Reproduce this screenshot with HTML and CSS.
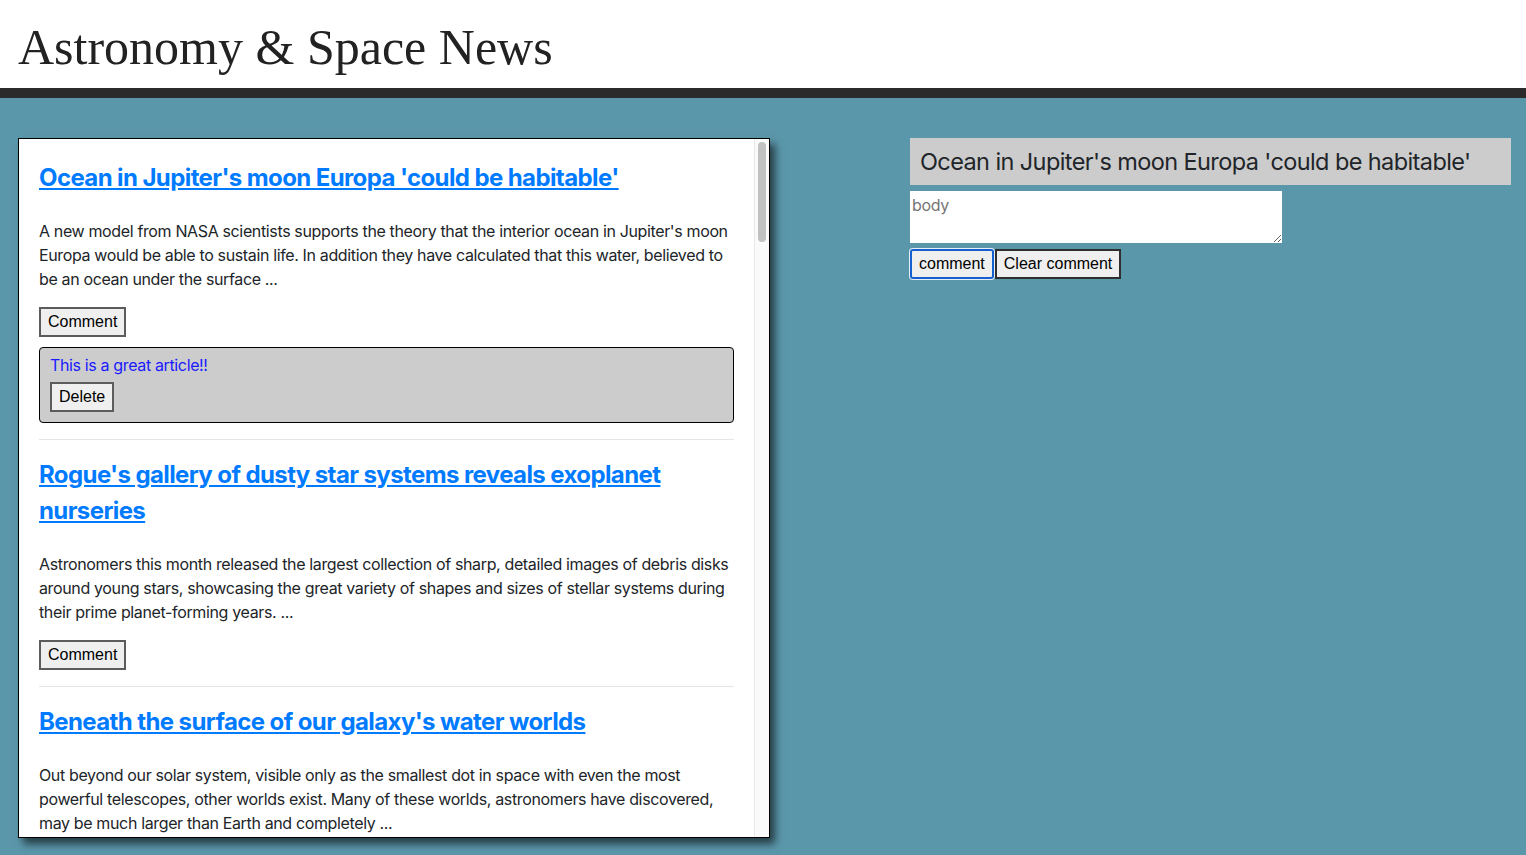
FILE: index.html
```html
<!DOCTYPE html>
<html lang="en">
<head>
<meta charset="utf-8">
<title>Astronomy &amp; Space News</title>
<link rel="stylesheet" href="styles.css">
</head>
<body>
<header class="site-header">
  <h1 class="site-title">Astronomy &amp; Space News</h1>
</header>
<main class="layout">
  <section class="feed">
    <div class="feed-scroll">
      <article class="story">
        <h2 class="story-title"><a href="#">Ocean in Jupiter's moon Europa 'could be habitable'</a></h2>
        <p class="story-summary">A new model from NASA scientists supports the theory that the interior ocean in Jupiter's moon Europa would be able to sustain life. In addition they have calculated that this water, believed to be an ocean under the surface ...</p>
        <button class="btn">Comment</button>
        <div class="comment">
          <p class="comment-text">This is a great article!!</p>
          <button class="btn">Delete</button>
        </div>
      </article>
      <hr class="divider">
      <article class="story">
        <h2 class="story-title"><a href="#">Rogue's gallery of dusty star systems reveals exoplanet nurseries</a></h2>
        <p class="story-summary">Astronomers this month released the largest collection of sharp, detailed images of debris disks around young stars, showcasing the great variety of shapes and sizes of stellar systems during their prime planet-forming years. ...</p>
        <button class="btn">Comment</button>
      </article>
      <hr class="divider">
      <article class="story">
        <h2 class="story-title"><a href="#">Beneath the surface of our galaxy's water worlds</a></h2>
        <p class="story-summary">Out beyond our solar system, visible only as the smallest dot in space with even the most powerful telescopes, other worlds exist. Many of these worlds, astronomers have discovered, may be much larger than Earth and completely ...</p>
      </article>
    </div>
    <div class="scrollbar">
      <div class="scrollbar-thumb"></div>
    </div>
  </section>
  <aside class="composer">
    <h2 class="composer-title">Ocean in Jupiter's moon Europa 'could be habitable'</h2>
    <textarea class="composer-body" placeholder="body"></textarea>
    <div class="composer-actions">
      <button class="btn btn-focus">comment</button>
      <button class="btn btn-dark">Clear comment</button>
    </div>
  </aside>
</main>
</body>
</html>
```

FILE: styles.css
```css
html, body {
  margin: 0;
  padding: 0;
}

body {
  font-family: Inter, "Noto Sans", sans-serif;
  font-size: 16px;
  line-height: 24px;
  letter-spacing: -0.36px;
  color: #212529;
  background: #5b97ab;
}

.site-header {
  background: #fff;
  height: 98px;
  box-sizing: border-box;
  border-bottom: 10px solid #2b2b2b;
  padding: 18px 18px 0;
}

.site-title {
  margin: 0;
  font-family: "Liberation Serif", "Times New Roman", serif;
  font-weight: 400;
  font-size: 50px;
  line-height: 58px;
  letter-spacing: 0;
  color: #222;
}

.layout {
  display: flex;
  justify-content: space-between;
  align-items: flex-start;
  padding: 40px 15px 0 18px;
  min-height: calc(100vh - 98px);
  box-sizing: border-box;
}

.feed {
  display: flex;
  width: 752px;
  height: 700px;
  box-sizing: border-box;
  border: 1px solid #000;
  background: #fff;
  box-shadow: 5px 6px 8px rgba(0, 0, 0, 0.6);
}

.feed-scroll {
  flex: 1;
  min-width: 0;
  overflow: hidden;
  padding: 21px 20px 20px;
}

.scrollbar {
  flex: none;
  width: 8px;
  border-left: 1px solid #e8e8e8;
  background: #fafafa;
  padding: 3px 3px 0;
}

.scrollbar-thumb {
  height: 100px;
  background: #c1c1c1;
  border-radius: 4px;
}

.story-title {
  margin: 0 0 23px;
  font-size: 24px;
  line-height: 36px;
  font-weight: 700;
  letter-spacing: -0.6px;
}

.story-title a {
  color: #007bff;
  text-decoration: underline;
  text-underline-offset: 2px;
}

.story-summary {
  margin: 0 0 16px;
}

.btn {
  font-family: "Liberation Sans", Arial, sans-serif;
  font-size: 16px;
  line-height: 18px;
  letter-spacing: 0;
  color: #000;
  background: #efefef;
  border: 2px solid #5c5c5c;
  padding: 4px 7px;
  margin: 0;
  display: inline-block;
  vertical-align: top;
}

.comment {
  margin-top: 10px;
  background: #ccc;
  border: 1px solid #000;
  border-radius: 4px;
  padding: 5px 10px 10px;
}

.comment-text {
  margin: 0 0 5px;
  color: #1a1aff;
}

.divider {
  border: 0;
  border-top: 1px solid #e5e5e5;
  margin: 16px 0 17px;
}

.composer {
  width: 601px;
  display: flex;
  flex-direction: column;
  align-items: flex-start;
}

.composer-title {
  align-self: stretch;
  margin: 0;
  background: #ccc;
  padding: 9px 10px;
  font-size: 23.5px;
  line-height: 29px;
  font-weight: 400;
  letter-spacing: -0.6px;
  white-space: nowrap;
  color: #212529;
}

.composer-body {
  margin: 6px 0 0;
  width: 372px;
  height: 52px;
  box-sizing: border-box;
  border: 0;
  padding: 2px;
  font-family: Inter, "Noto Sans", sans-serif;
  font-size: 16px;
  line-height: 24px;
  letter-spacing: -0.36px;
  background: #fff;
  resize: vertical;
}

.composer-body::placeholder {
  color: #757575;
}

.composer-actions {
  display: flex;
  gap: 1px;
  margin-top: 6px;
}

.btn-focus {
  border-color: #1560cf;
  border-radius: 3px;
  box-shadow: 0 0 0 1px #e6eef8;
}

.btn-dark {
  border-color: #2e2e2e;
}
```
